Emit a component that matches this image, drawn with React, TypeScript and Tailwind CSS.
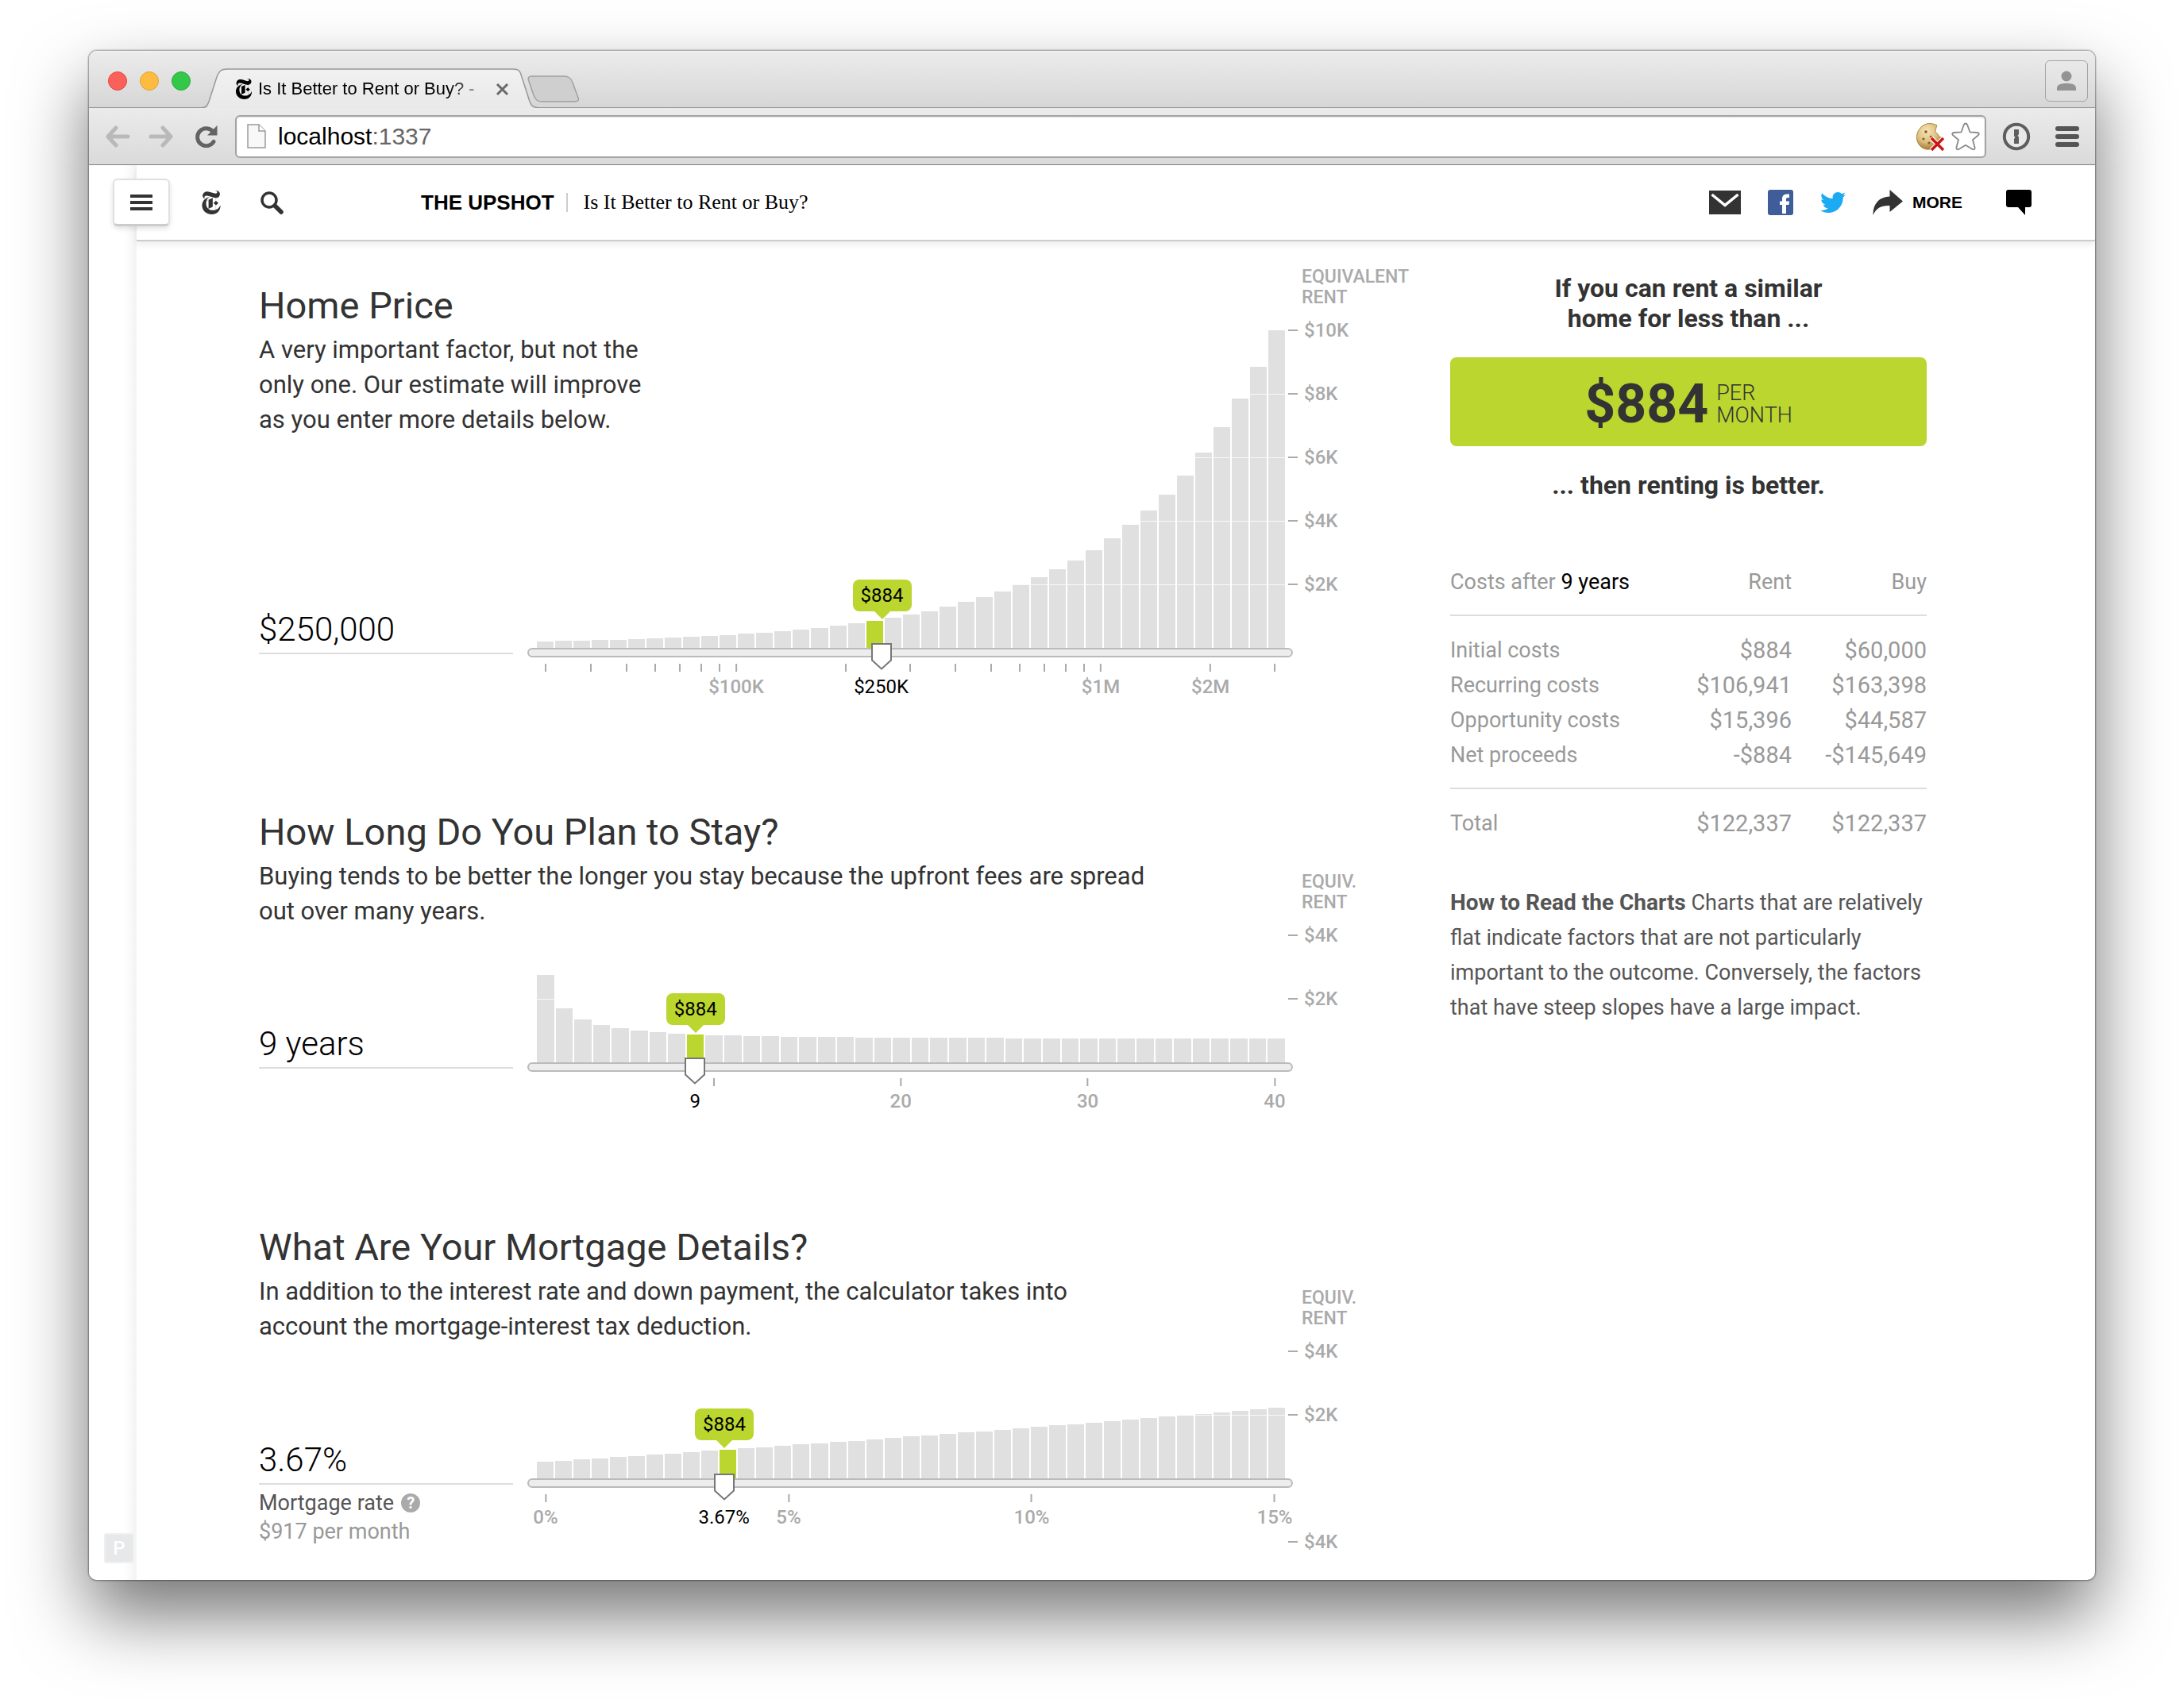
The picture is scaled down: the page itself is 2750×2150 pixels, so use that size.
import React, { useState } from "react";
import { FaTwitter } from "react-icons/fa";
import { SiNewyorktimes } from "react-icons/si";

type Tick = { at: number; label?: string };

type ChartProps = {
  id: string;
  name: string;
  value: string;
  title: string;
  lines: string[];
  bars: number[];
  active: number;
  position: number;
  valueLabel: string;
  ticks: Tick[];
  axisTitle: string;
  axis: string[];
  plotHeight: string;
  gridRows: number;
  headerPad: string;
  chartPad: string;
  valuePad: string;
  extra?: React.ReactNode;
  nextAxis?: string;
};

const homeBars = [
  8, 9, 9, 10, 10, 11, 12, 13, 14, 15, 16, 18, 19, 21, 23, 25, 28, 31, 34, 38, 42, 46, 52, 58, 64, 71, 80, 89, 99, 110,
  123, 138, 155, 173, 193, 217, 246, 278, 314, 354, 400,
];
const stayBars = [
  110, 68, 54, 47, 43, 40, 38, 36, 35, 34, 34, 33, 33, 32, 32, 32, 32, 31, 31, 31, 31, 31, 31, 31, 31, 30, 30, 30, 30,
  30, 30, 30, 30, 30, 30, 30, 30, 30, 30, 30,
];
const rateBars = Array.from({ length: 41 }, (_, i) => Math.round(21 + 1.45 * i + 0.00625 * i * i));

const priceAt = (v: number) => (Math.log10(v / 30) / 2) * 100;
const priceTicks: Tick[] = [30, 40, 50, 60, 70, 80, 90, 100, 200, 300, 400, 500, 600, 700, 800, 900, 1000, 2000, 3000].map(
  (v) => ({
    at: priceAt(v),
    label: v === 100 ? "$100K" : v === 1000 ? "$1M" : v === 2000 ? "$2M" : undefined,
  }),
);

function Factor(p: ChartProps) {
  const [text, setText] = useState(p.value);
  const [pos, setPos] = useState(p.position);
  return (
    <section className="grid" aria-labelledby={p.id + "-title"}>
      <div className={"col-start-1 row-start-1 w-fit self-start " + p.headerPad}>
        <h2 id={p.id + "-title"} className="text-[47px] leading-[56px] text-[#333]">
          {p.title}
        </h2>
        <p className="mt-[6px] text-[31px] leading-[44px] text-[#333]">
          {p.lines.map((l) => (
            <span key={l} className="block">
              {l}
            </span>
          ))}
        </p>
      </div>
      <div className={"col-start-1 row-start-1 flex " + p.chartPad}>
        <div className={"w-[320px] shrink-0 " + p.valuePad}>
          <input
            id={p.id}
            aria-label={p.name}
            value={text}
            onChange={(e) => setText(e.target.value)}
            className="block h-[52px] w-full border-b-2 border-[#ddd] bg-transparent pb-[9px] text-[42px] font-light text-black outline-none"
          />
          {p.extra}
        </div>
        <div className="ml-[18px] min-w-0 flex-1 pt-[81px]">
          <div className={"relative mr-[10px] ml-[12px] flex items-end gap-[2px] " + p.plotHeight}>
            {p.bars.map((h, i) => (
              <div
                key={i}
                className={i === p.active ? "min-w-0 flex-1 bg-[#bbd62f]" : "min-w-0 flex-1 bg-[#e0e0e0]"}
                style={{ height: h }}
              />
            ))}
            {Array.from({ length: p.gridRows }, (_, i) => (
              <div key={i} className="absolute inset-x-0 h-px bg-white/80" style={{ bottom: 80 * (i + 1) - 1 }} />
            ))}
            <div className="absolute inset-x-[11px] bottom-0">
              <div
                className="absolute flex w-[74px] -translate-x-1/2 flex-col items-center"
                style={{ left: p.position + "%", bottom: p.bars[p.active] + 2 }}
              >
                <div className="flex h-[40px] w-full items-center justify-center rounded-[8px] bg-[#bbd62f] text-[24px] text-black">
                  $884
                </div>
                <svg width="20" height="10" viewBox="0 0 20 10" aria-hidden="true">
                  <path d="M0 0H20L10 10Z" fill="#bbd62f" />
                </svg>
              </div>
            </div>
          </div>
          <div className="relative h-[12px] rounded-full border-2 border-[#bbb] bg-[#ededed]">
            <div className="absolute inset-x-[21px] top-[-8px]">
              <svg
                width="26"
                height="34"
                viewBox="0 0 26 34"
                className="absolute -translate-x-1/2"
                style={{ left: p.position + "%" }}
                aria-hidden="true"
              >
                <path d="M1 1H25V21.500L13 32.500L1 21.500Z" fill="#fff" stroke="#777" strokeWidth="2" />
              </svg>
            </div>
            <input
              type="range"
              min={0}
              max={100}
              step="any"
              value={pos}
              onChange={(e) => setPos(Number(e.target.value))}
              aria-label={p.name}
              className="absolute inset-0 w-full opacity-0"
            />
          </div>
          <div className="relative mx-[23px] mt-[8px] h-[43px] text-[24px] leading-[28px] font-medium text-[#aaa]">
            {p.ticks.map((t) => (
              <div key={t.at} className="absolute flex -translate-x-1/2 flex-col items-center" style={{ left: t.at + "%" }}>
                <div className="h-[10px] w-[2px] bg-[#aaa]" />
                {t.label && <div className="mt-[5px]">{t.label}</div>}
              </div>
            ))}
            <div
              className="absolute top-[15px] -translate-x-1/2 font-normal text-black"
              style={{ left: p.position + "%" }}
            >
              {p.valueLabel}
            </div>
          </div>
        </div>
        <div className="-ml-[6px] w-[204px] shrink-0 text-[24px] leading-[26px] font-medium text-[#aaa]">
          <div className="ml-[17px] pt-px text-[23px]">
            {p.axisTitle}
            <br />
            RENT
          </div>
          <div className="mt-[15px] flex flex-col gap-[54px]">
            {p.axis.map((a) => (
              <div key={a} className="flex items-center gap-[8px]">
                <div className="h-[2px] w-[12px] bg-[#aaa]" />
                {a}
              </div>
            ))}
          </div>
          {p.nextAxis && (
            <div className="mt-[134px] flex items-center gap-[8px]">
              <div className="h-[2px] w-[12px] bg-[#aaa]" />
              {p.nextAxis}
            </div>
          )}
        </div>
      </div>
    </section>
  );
}

function TabStrip() {
  return (
    <div className="flex h-[72px] items-end bg-linear-to-b from-[#ececec] to-[#d6d6d6] shadow-[inset_0_1px_0_#f6f6f6,inset_0_-1px_0_#989898]">
      <div className="mb-[22px] ml-[24px] flex gap-[16px]">
        <button aria-label="Close window" className="size-[24px] rounded-full border border-[#e2463f] bg-[#fc605b]" />
        <button aria-label="Minimize window" className="size-[24px] rounded-full border border-[#dea035] bg-[#fdbc40]" />
        <button aria-label="Zoom window" className="size-[24px] rounded-full border border-[#27aa35] bg-[#34c84a]" />
      </div>
      <div className="relative ml-[15px] flex h-[50px] w-[424px] items-center pt-[2px] pr-[38px] pl-[39px]">
        <svg className="absolute inset-0" width="424" height="50" viewBox="0 0 424 50" aria-hidden="true">
          <defs>
            <linearGradient id="tabfill" x1="0" x2="0" y1="0" y2="1">
              <stop offset="0" stopColor="#f1f1f1" />
              <stop offset="1" stopColor="#e9e9e9" />
            </linearGradient>
          </defs>
          <path
            d="M0 50V49.500C5 49.500 6 47 8 42L18 11C21 3 24 1 31 1H391C398 1 400 3 402 11L412 42C414 47 416 49.500 422 49.500V50Z"
            fill="url(#tabfill)"
          />
          <path
            d="M0 49.500C5 49.500 6 47 8 42L18 11C21 3 24 1 31 1H391C398 1 400 3 402 11L412 42C414 47 416 49.500 422 49.500"
            fill="none"
            stroke="#989898"
            strokeWidth="1.500"
          />
        </svg>
        <SiNewyorktimes className="relative size-[26px] shrink-0 text-black" aria-hidden="true" />
        <span className="relative ml-[5px] flex-1 overflow-hidden text-[22px] leading-[28px] font-normal whitespace-nowrap text-black [mask-image:linear-gradient(to_right,black_80%,transparent_100%)] [font-family:'Liberation_Sans',sans-serif]">
          Is It Better to Rent or Buy? -
        </span>
        <button aria-label="Close tab" className="relative">
          <svg width="17" height="17" viewBox="0 0 17 17" aria-hidden="true">
            <path d="M2 2L15 15M15 2L2 15" stroke="#6a6a6a" strokeWidth="3" />
          </svg>
        </button>
      </div>
      <button aria-label="New tab" className="mb-[7px] -ml-[15px]">
        <svg width="66" height="34" viewBox="0 0 66 34" aria-hidden="true">
          <path
            d="M5 1H46C52 1 55 3 57 9L64 28C65 31 64 33 60 33H19C13 33 10 31 8 25L1.500 6C.5 3 2 1 5 1Z"
            fill="#cfcfcf"
            stroke="#a0a0a0"
            strokeWidth="1.500"
          />
        </svg>
      </button>
      <button
        aria-label="Profile"
        className="mr-[9px] mb-[8px] ml-auto flex h-[52px] w-[54px] items-center justify-center rounded-[6px] border border-[#a4a4a4] bg-linear-to-b from-[#e9e9e9] to-[#dcdcdc]"
      >
        <svg width="24" height="26" viewBox="0 0 24 26" fill="#939393" aria-hidden="true">
          <circle cx="12" cy="7" r="6.500" />
          <path d="M0 25V22C0 18 4 16 12 16S24 18 24 22V25Z" />
        </svg>
      </button>
    </div>
  );
}

function Toolbar() {
  return (
    <div className="flex h-[72px] items-center border-b border-[#808080] bg-linear-to-b from-[#ebebeb] to-[#dadada] pl-[20px]">
      <button aria-label="Back">
        <svg width="32" height="28" viewBox="0 0 32 28" fill="none" stroke="#b9b9b9" strokeWidth="5" aria-hidden="true">
          <path d="M14 3L4 14L14 25M4 14H29" strokeLinecap="round" strokeLinejoin="round" />
        </svg>
      </button>
      <button aria-label="Forward" className="ml-[23px]">
        <svg width="32" height="28" viewBox="0 0 32 28" fill="none" stroke="#b9b9b9" strokeWidth="5" aria-hidden="true">
          <path d="M18 3L28 14L18 25M28 14H3" strokeLinecap="round" strokeLinejoin="round" />
        </svg>
      </button>
      <button aria-label="Reload" className="ml-[27px]">
        <svg width="28" height="28" viewBox="0 0 28 28" aria-hidden="true">
          <path d="M21.500 7A11 11 0 1 0 23 20.500" fill="none" stroke="#636363" strokeWidth="5" strokeLinecap="round" />
          <path d="M27.500 0V12.500H15Z" fill="#636363" />
        </svg>
      </button>
      <div className="ml-[22px] flex h-[54px] flex-1 items-center rounded-[6px] border-2 border-[#a3a3a3] bg-white pr-[6px] pl-[13px] shadow-[inset_0_1px_2px_#ddd]">
        <svg width="24" height="31" viewBox="0 0 24 31" aria-hidden="true">
          <path d="M1 1H15L23 9V30H1Z" fill="#f8f8f8" stroke="#9a9a9a" strokeWidth="1.500" />
          <path d="M15 1V9H23" fill="#fff" stroke="#9a9a9a" strokeWidth="1.500" />
        </svg>
        <span className="ml-[15px] flex-1 text-[30px] leading-[36px] [font-family:'Liberation_Sans',sans-serif]">
          <span className="text-black">localhost</span>
          <span className="text-[#666]">:1337</span>
        </span>
        <svg width="38" height="36" viewBox="0 0 38 36" aria-hidden="true">
          <defs>
            <radialGradient id="cookie" cx=".4" cy=".3" r=".7">
              <stop offset="0" stopColor="#f6e6b8" />
              <stop offset=".6" stopColor="#dcbf80" />
              <stop offset="1" stopColor="#a87a35" />
            </radialGradient>
          </defs>
          <path
            d="M27 4C20 0 12 1 7 6C0 13 0 23 5 29C10 35 18 36 24 31L30 22L33 19C29 19 29 15 27 14C24 13 25 9 27 4Z"
            fill="url(#cookie)"
            stroke="#a9853f"
            strokeWidth="1"
          />
          <g fill="#8a5a25">
            <circle cx="13" cy="12" r="1.800" />
            <circle cx="10" cy="21" r="1.600" />
            <circle cx="17" cy="26" r="1.600" />
            <circle cx="19" cy="18" r="1.300" />
          </g>
          <path d="M20 20L35 35M35 20L20 35" stroke="#fff" strokeWidth="6" />
          <path d="M20 20L35 35M35 20L20 35" stroke="#cf1512" strokeWidth="3.500" />
        </svg>
        <button aria-label="Bookmark this page" className="ml-[7px]">
          <svg width="36" height="36" viewBox="0 0 36 36" aria-hidden="true">
            <path
              d="M18 1.500C19 1.500 19.800 2.500 20.300 3.500L23.500 12.500L32.500 13C35 13.200 35.500 15 33.700 16.500L27 22L29.500 31.500C30 34 28.300 35.200 26.200 33.800L18 28.700L9.800 33.800C7.700 35.200 6 34 6.500 31.500L9 22L2.300 16.500C.5 15 1 13.200 3.500 13L12.500 12.500L15.700 3.500C16.200 2.500 17 1.500 18 1.500Z"
              fill="#fff"
              stroke="#8a8a8a"
              strokeWidth="1.800"
            />
          </svg>
        </button>
      </div>
      <button aria-label="Password manager" className="ml-[20px]">
        <svg width="36" height="36" viewBox="0 0 36 36" aria-hidden="true">
          <circle cx="18" cy="18" r="15.200" fill="#e8e8e8" stroke="#5e5e5e" strokeWidth="4" />
          <path d="M15 9H21V15L19.500 17L21 18.500V27H15V21L16.500 19L15 17.500Z" fill="#5e5e5e" />
        </svg>
      </button>
      <button aria-label="Browser menu" className="mr-[20px] ml-[31px] flex flex-col gap-[4px]">
        <span className="h-[6px] w-[30px] rounded-full bg-[#555]" />
        <span className="h-[6px] w-[30px] rounded-full bg-[#555]" />
        <span className="h-[6px] w-[30px] rounded-full bg-[#555]" />
      </button>
    </div>
  );
}

function PageHeader() {
  return (
    <header className="relative flex h-[96px] items-center border-b-2 border-[#ccc] bg-white pr-[80px] shadow-[0_4px_8px_rgba(0,0,0,0.08)]">
      <button
        aria-label="Sections"
        className="-ml-[30px] flex h-[60px] w-[72px] flex-col items-center justify-center gap-[4px] rounded-[6px] border-2 border-b-[3px] border-[#e0e0e0] border-b-[#ccc] bg-white shadow-[0_3px_6px_rgba(0,0,0,0.12)]"
      >
        <span className="h-[4px] w-[28px] bg-[#333]" />
        <span className="h-[4px] w-[28px] bg-[#333]" />
        <span className="h-[4px] w-[28px] bg-[#333]" />
      </button>
      <a href="#home" aria-label="The New York Times" className="ml-[37px] text-[#333]">
        <SiNewyorktimes className="size-[30px]" />
      </a>
      <button aria-label="Search" className="ml-[47px]">
        <svg width="29" height="29" viewBox="0 0 29 29" aria-hidden="true">
          <circle cx="11" cy="11" r="9" fill="none" stroke="#333" strokeWidth="3.500" />
          <path d="M18 18L26 26" stroke="#333" strokeWidth="5.500" strokeLinecap="round" />
        </svg>
      </button>
      <a href="#upshot" className="ml-[173px] text-[26px] leading-[32px] font-bold whitespace-nowrap text-black [font-family:'Liberation_Sans',sans-serif]">
        THE UPSHOT
      </a>
      <span className="ml-[15px] h-[24px] w-[2px] bg-[#ccc]" />
      <h1 className="ml-[20px] text-[26px] leading-[32px] whitespace-nowrap text-black [font-family:'Liberation_Serif',serif]">
        Is It Better to Rent or Buy?
      </h1>
      <a href="#email" aria-label="Email" className="ml-auto">
        <svg width="40" height="30" viewBox="0 0 40 30" aria-hidden="true">
          <rect width="40" height="30" fill="#333" />
          <path d="M3.500 5L20 18.500L36.500 5" fill="none" stroke="#fff" strokeWidth="3.500" />
        </svg>
      </a>
      <a href="#facebook" aria-label="Facebook" className="ml-[34px]">
        <svg width="32" height="32" viewBox="0 0 32 32" aria-hidden="true">
          <rect width="32" height="32" rx="3" fill="#3f5d99" />
          <path
            d="M18 30V19H15V14.500H18V11.500C18 7.500 20.500 5.500 24 5.500H27V10H25C23.300 10 23 10.800 23 12V14.500H27L26.500 19H23V30Z"
            fill="#fff"
          />
        </svg>
      </a>
      <a href="#twitter" aria-label="Twitter" className="ml-[34px] text-[#1caaf2]">
        <FaTwitter className="size-[32px]" />
      </a>
      <button className="ml-[34px] flex items-center gap-[12px] text-[21px] font-bold text-black [font-family:'Liberation_Sans',sans-serif]">
        <svg width="38" height="32" viewBox="0 0 38 32" aria-hidden="true">
          <path d="M21.500 0L38 14.500L21.500 28V20C11 19.500 4.500 23 .5 32C0 18 8 9 21.500 8.500Z" fill="#333" />
        </svg>
        MORE
      </button>
      <button aria-label="Comments" className="ml-[55px]">
        <svg width="32" height="32" viewBox="0 0 32 32" aria-hidden="true">
          <path d="M3 0H29Q32 0 32 3V19Q32 22 29 22H24V32L15 22H3Q0 22 0 19V3Q0 0 3 0Z" fill="#000" />
        </svg>
      </button>
    </header>
  );
}

const rows = [
  ["Initial costs", "$884", "$60,000"],
  ["Recurring costs", "$106,941", "$163,398"],
  ["Opportunity costs", "$15,396", "$44,587"],
  ["Net proceeds", "-$884", "-$145,649"],
];

function Results() {
  return (
    <aside className="w-[600px] shrink-0 pt-[9px]">
      <p className="text-center text-[32px] leading-[38px] font-bold text-[#333]">
        If you can rent a similar
        <br />
        home for less than ...
      </p>
      <div className="mt-[30px] flex h-[112px] items-center justify-center gap-[10px] rounded-[8px] bg-[#bbd62f] pt-[6px] text-[#333]">
        <strong className="text-[68px] leading-[80px] font-bold">$884</strong>
        <span className="text-[27px] leading-[28px] font-light">
          PER
          <br />
          MONTH
        </span>
      </div>
      <p className="mt-[30px] text-center text-[32px] leading-[38px] font-bold text-[#333]">... then renting is better.</p>
      <table className="mt-[81px] w-full border-collapse text-right text-[27px] leading-[44px] text-[#999]">
        <thead>
          <tr className="border-b-2 border-[#ddd]">
            <th scope="col" className="pb-[19px] text-left font-normal">
              Costs after <span className="text-black">9 years</span>
            </th>
            <th scope="col" className="pb-[19px] font-normal">
              Rent
            </th>
            <th scope="col" className="w-[170px] pb-[19px] font-normal">
              Buy
            </th>
          </tr>
        </thead>
        <tbody className="border-b-2 border-[#ddd] [&>tr:first-child>*]:pt-[21px] [&>tr:last-child>*]:pb-[19px]">
          {rows.map((r) => (
            <tr key={r[0]}>
              <th scope="row" className="text-left font-normal">
                {r[0]}
              </th>
              <td className="text-[29px]">{r[1]}</td>
              <td className="text-[29px]">{r[2]}</td>
            </tr>
          ))}
        </tbody>
        <tfoot>
          <tr>
            <th scope="row" className="pt-[21px] text-left font-normal">
              Total
            </th>
            <td className="pt-[21px] text-[29px]">$122,337</td>
            <td className="pt-[21px] text-[29px]">$122,337</td>
          </tr>
        </tfoot>
      </table>
      <p className="mt-[56px] text-[27px] leading-[44px] text-[#555]">
        <b className="text-[28px] font-bold">How to Read the Charts</b> Charts that are relatively
        <br />
        flat indicate factors that are not particularly
        <br />
        important to the outcome. Conversely, the factors
        <br />
        that have steep slopes have a large impact.
      </p>
    </aside>
  );
}

export default function App() {
  return (
    <div className="min-h-screen bg-white px-[112px] pt-[64px] pb-[160px] [font-family:Roboto,'Liberation_Sans',sans-serif]">
      <div className="overflow-hidden rounded-[10px] bg-white shadow-[0_0_2px_1px_rgba(0,0,0,0.4),0_44px_90px_rgba(0,0,0,0.55)]">
        <TabStrip />
        <Toolbar />
        <div className="flex">
          <nav aria-label="Sections rail" className="flex w-[60px] shrink-0 flex-col bg-linear-to-r from-white from-75% to-[#f3f3f3]">
            <div className="mt-auto mb-[21px] ml-[19px] flex size-[38px] items-center justify-center rounded-[3px] border-2 border-[#f0f0f0] bg-[#e6e8e9] text-[24px] font-medium text-white">
              P
            </div>
          </nav>
          <div className="min-w-0 flex-1">
            <PageHeader />
            <main className="flex pt-[31px] pr-[212px] pb-[35px] pl-[154px]">
              <div className="min-w-0 flex-1">
                <Factor
                  id="price"
                  name="Home price"
                  value="$250,000"
                  title="Home Price"
                  lines={["A very important factor, but not the", "only one. Our estimate will improve", "as you enter more details below."]}
                  bars={homeBars}
                  active={18}
                  position={priceAt(250)}
                  valueLabel="$250K"
                  ticks={priceTicks}
                  axisTitle="EQUIVALENT"
                  axis={["$10K", "$8K", "$6K", "$4K", "$2K"]}
                  plotHeight="h-[400px]"
                  gridRows={4}
                  headerPad="pt-[22px]"
                  chartPad="pt-0"
                  valuePad="pt-[437px]"
                />
                <div className="mt-[141px]">
                  <Factor
                    id="stay"
                    name="Years you plan to stay"
                    value="9 years"
                    title="How Long Do You Plan to Stay?"
                    lines={["Buying tends to be better the longer you stay because the upfront fees are spread", "out over many years."]}
                    bars={stayBars}
                    active={8}
                    position={(8 / 39) * 100}
                    valueLabel="9"
                    ticks={[{ at: (9 / 39) * 100 }, { at: (19 / 39) * 100, label: "20" }, { at: (29 / 39) * 100, label: "30" }, { at: 100, label: "40" }]}
                    axisTitle="EQUIV."
                    axis={["$4K", "$2K"]}
                    plotHeight="h-[160px]"
                    gridRows={1}
                    headerPad="pt-0"
                    chartPad="pt-[77px]"
                    valuePad="pt-[197px]"
                  />
                </div>
                <div className="mt-[142px]">
                  <Factor
                    id="rate"
                    name="Mortgage rate"
                    value="3.67%"
                    title="What Are Your Mortgage Details?"
                    lines={["In addition to the interest rate and down payment, the calculator takes into", "account the mortgage-interest tax deduction."]}
                    bars={rateBars}
                    active={10}
                    position={(3.67 / 15) * 100}
                    valueLabel="3.67%"
                    ticks={[{ at: 0, label: "0%" }, { at: 100 / 3, label: "5%" }, { at: 200 / 3, label: "10%" }, { at: 100, label: "15%" }]}
                    axisTitle="EQUIV."
                    axis={["$4K", "$2K"]}
                    plotHeight="h-[160px]"
                    gridRows={1}
                    headerPad="pt-0"
                    chartPad="pt-[78px]"
                    valuePad="pt-[197px]"
                    nextAxis="$4K"
                    extra={
                      <div className="pt-[5px] text-[27px] leading-[36px]">
                        <div className="flex items-center gap-[9px] text-[#555]">
                          <label htmlFor="rate">Mortgage rate</label>
                          <button
                            aria-label="About the mortgage rate"
                            className="flex size-[24px] items-center justify-center rounded-full bg-[#aaa] text-[20px] leading-[24px] font-bold text-white"
                          >
                            ?
                          </button>
                        </div>
                        <div className="text-[#999]">$917 per month</div>
                      </div>
                    }
                  />
                </div>
              </div>
              <Results />
            </main>
          </div>
        </div>
      </div>
    </div>
  );
}
